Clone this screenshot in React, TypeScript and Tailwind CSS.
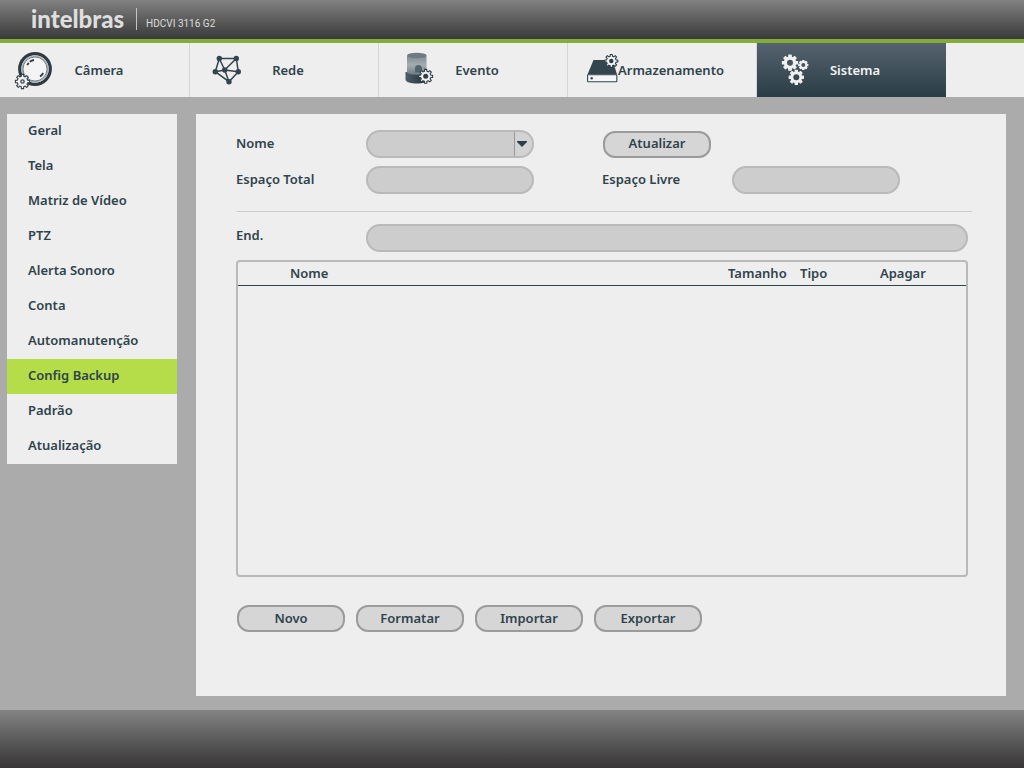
import type { ReactNode } from 'react';
import clsx from 'clsx';

type GearProps = {
  cx: number;
  cy: number;
  r: number;
  hole: number;
  teeth?: number;
  fill?: string;
  stroke?: string;
  holeFill?: string;
};

const gearPath = (cx: number, cy: number, r: number, teeth: number) => {
  const inner = r * 0.74;
  const step = (Math.PI * 2) / teeth;
  const points: string[] = [];
  for (let i = 0; i < teeth; i++) {
    const a = i * step - Math.PI / 2;
    for (const [offset, radius] of [
      [-0.3, inner],
      [-0.2, r],
      [0.2, r],
      [0.3, inner],
    ]) {
      const t = a + offset * step;
      points.push(
        `${(cx + radius * Math.cos(t)).toFixed(2)} ${(cy + radius * Math.sin(t)).toFixed(2)}`
      );
    }
  }
  return `M${points.join('L')}Z`;
};

const Gear = ({
  cx,
  cy,
  r,
  hole,
  teeth = 8,
  fill = '#f1f1f1',
  stroke = '#2f3f48',
  holeFill = '#2f3f48',
}: GearProps) => (
  <>
    <path
      d={gearPath(cx, cy, r, teeth)}
      fill={fill}
      stroke={stroke}
      strokeWidth={1.1}
      strokeLinejoin="round"
    />
    <circle cx={cx} cy={cy} r={hole} fill={holeFill} />
  </>
);

const TabIcon = ({ children }: { children: ReactNode }) => (
  <svg
    viewBox="0 0 50 54"
    aria-hidden="true"
    className="h-[54px] w-[50px] shrink-0 overflow-visible"
  >
    {children}
  </svg>
);

const CameraIcon = () => (
  <TabIcon>
    <circle cx="34" cy="26" r="15.3" fill="#f4f4f4" stroke="#2f3b44" strokeWidth="3.2" />
    <circle cx="34" cy="26" r="12.9" fill="none" stroke="#a9b0b4" strokeWidth="1.4" />
    <circle cx="34" cy="26" r="12" fill="none" stroke="#4a565e" strokeWidth="0.7" />
    <path d="M26.2 22.2a9 9 0 0 1 1.600-2.400" stroke="#2f3b44" strokeWidth="1.8" fill="none" />
    <path d="M28.8 18.8a9 9 0 0 1 4.200-1.800" stroke="#2f3b44" strokeWidth="1.8" fill="none" />
    <path d="M39 33.400a9 9 0 0 0 3.200-3.400" stroke="#2f3b44" strokeWidth="1.8" fill="none" />
    <Gear cx={21.5} cy={38.5} r={7.2} hole={2.3} holeFill="#3c4a52" />
    <circle cx="21.5" cy="38.5" r="1" fill="#f1f1f1" />
  </TabIcon>
);

const NetworkIcon = () => (
  <TabIcon>
    <path
      d="M29.3 15.5H46.3L48.3 28.7L39 38.7L25.3 28.7ZM29.3 15.5L34.7 27L46.3 15.5M25.3 28.7L34.7 27L48.3 28.7M34.7 27L39 38.7"
      fill="none"
      stroke="#33444e"
      strokeWidth="1.5"
    />
    {[
      [29.3, 15.5],
      [46.3, 15.5],
      [25.3, 28.7],
      [48.3, 28.7],
      [34.7, 27],
      [39, 38.7],
    ].map(([x, y]) => (
      <circle key={`${x}-${y}`} cx={x} cy={y} r="2.7" fill="#33444e" />
    ))}
  </TabIcon>
);

const EventIcon = () => (
  <TabIcon>
    <defs>
      <linearGradient id="siren-glass" x1="0" x2="0" y1="0" y2="1">
        <stop offset="0" stopColor="#7f8a90" />
        <stop offset="0.5" stopColor="#a3adb2" />
        <stop offset="1" stopColor="#6c7a82" />
      </linearGradient>
      <linearGradient id="siren-base" x1="0" x2="1" y1="0" y2="0">
        <stop offset="0" stopColor="#4d5d66" />
        <stop offset="1" stopColor="#1f2e37" />
      </linearGradient>
    </defs>
    <path d="M26.5 29v7.5c0 5.4 22.5 5.4 22.5 0V29Z" fill="url(#siren-base)" />
    <path d="M28 12.5V29.5c2 3 17.5 3 19.5 0V12.5Z" fill="url(#siren-glass)" />
    <ellipse cx="37.8" cy="12.5" rx="9.7" ry="2.7" fill="#6f7b82" />
    <path d="M36 29.5v-4a3.5 3.5 0 0 1 7 0v4Z" fill="#54646d" />
    <Gear cx={46.7} cy={33.3} r={7} hole={2.5} />
  </TabIcon>
);

const StorageIcon = () => (
  <TabIcon>
    <path d="M25.5 17H44.5L49 31.5H19.5Z" fill="#33464f" />
    <rect
      x="19.6"
      y="31.8"
      width="29.2"
      height="7"
      rx="0.6"
      fill="#f6f6f6"
      stroke="#33464f"
      strokeWidth="1.1"
    />
    <circle cx="23.7" cy="35.3" r="1.2" fill="#33464f" />
    <Gear cx={43.3} cy={18} r={6.6} hole={2.2} />
  </TabIcon>
);

const SystemIcon = () => (
  <TabIcon>
    <Gear cx={33} cy={19.7} r={7.7} hole={3} stroke="#f1f1f1" holeFill="#46545e" />
    <Gear cx={46.3} cy={22} r={4.6} hole={2} stroke="#f1f1f1" holeFill="#46545e" />
    <Gear cx={39.3} cy={34.3} r={7.2} hole={3} stroke="#f1f1f1" holeFill="#384a54" />
  </TabIcon>
);

const tabs = [
  { label: 'Câmera', Icon: CameraIcon },
  { label: 'Rede', Icon: NetworkIcon },
  { label: 'Evento', Icon: EventIcon },
  { label: 'Armazenamento', Icon: StorageIcon },
  { label: 'Sistema', Icon: SystemIcon, active: true },
];

const menu = [
  'Geral',
  'Tela',
  'Matriz de Vídeo',
  'PTZ',
  'Alerta Sonoro',
  'Conta',
  'Automanutenção',
  'Config Backup',
  'Padrão',
  'Atualização',
];

const Button = ({ children }: { children: ReactNode }) => (
  <button
    type="button"
    className="h-[27px] w-[108px] rounded-xl border-2 border-[#9b9b9b] bg-[#d6d6d6] pb-0.5 leading-4 font-semibold"
  >
    {children}
  </button>
);

const fieldClass =
  'h-7 w-full rounded-full border-2 border-[#b9b9b9] bg-[#cdcdcd] px-3 outline-none';

const Header = () => (
  <header className="border-b-4 border-[#83ac38]">
    <div className="flex h-[39px] items-center bg-linear-to-b from-[#828282] to-[#3a3a3a] pl-[31px]">
      <span className="pb-0.5 font-[Lato] text-[24px] leading-6 font-black text-[#dedede]">
        intelbras
      </span>
      <span className="mb-0.5 ml-3 h-[22px] w-px bg-[#c4c4c4]" />
      <span className="mt-2 ml-[9px] font-[Roboto] text-[10px] leading-4 font-normal text-[#dcdcdc]">
        HDCVI 3116 G2
      </span>
    </div>
  </header>
);

const Tabs = () => (
  <nav className="flex bg-[#eeeeee] pl-px">
    {tabs.map(({ label, Icon, active }) => (
      <a
        key={label}
        href="#"
        aria-current={active ? 'page' : undefined}
        className={clsx(
          'flex w-[189px] items-center',
          active
            ? 'bg-linear-to-b from-[#566370] to-[#2a3d45] text-[#f3f3f3]'
            : 'border-r border-[#d6d6d6]'
        )}
      >
        <Icon />
        <span className="min-w-24 text-center leading-4">{label}</span>
      </a>
    ))}
  </nav>
);

const Sidebar = () => (
  <aside className="w-[170px] shrink-0 bg-[#eeeeee]">
    <ul>
      {menu.map((item) => (
        <li key={item}>
          <a
            href="#"
            className={clsx(
              'flex h-[35px] items-center pb-0.5 pl-[21px]',
              item === 'Config Backup' && 'bg-[#b5dd4a]'
            )}
          >
            {item}
          </a>
        </li>
      ))}
    </ul>
  </aside>
);

const DeviceForm = () => (
  <div className="grid grid-cols-[130px_168px_68px_130px_168px] items-center gap-y-2">
    <label htmlFor="device">Nome</label>
    <div className="relative">
      <select id="device" className={clsx(fieldClass, 'appearance-none')}>
        <option value=""></option>
      </select>
      <span className="pointer-events-none absolute inset-y-0.5 right-0.5 flex w-[18px] items-center rounded-r-full border-l border-[#999999] bg-[#d3d3d3] pl-0.5">
        <svg viewBox="0 0 10 6" className="h-1.5 w-2.5" aria-hidden="true">
          <path d="M0 0h10v1L5 6L0 1Z" fill="#2b3f49" />
        </svg>
      </span>
    </div>
    <div className="col-start-4 pl-px">
      <Button>Atualizar</Button>
    </div>
    <label htmlFor="total" className="col-start-1">
      Espaço Total
    </label>
    <input id="total" readOnly className={fieldClass} />
    <label htmlFor="free" className="col-start-4">
      Espaço Livre
    </label>
    <input id="free" readOnly className={fieldClass} />
  </div>
);

const FileTable = () => (
  <div className="mt-2 min-h-40 flex-1 rounded border-2 border-[#b9b9b9]">
    <table className="w-full table-fixed">
      <thead>
        <tr className="h-[23px] border-b border-[#2f434c] text-left leading-4 *:font-semibold">
          <td className="w-[52px]" />
          <th scope="col">Nome</th>
          <th scope="col" className="w-[72px]">
            Tamanho
          </th>
          <th scope="col" className="w-20">
            Tipo
          </th>
          <th scope="col" className="w-[86px]">
            Apagar
          </th>
        </tr>
      </thead>
      <tbody />
    </table>
  </div>
);

export default function App() {
  return (
    <div className="flex min-h-screen flex-col bg-[#ababab] font-['Noto_Sans',sans-serif] text-[13px] font-semibold text-[#2f434c]">
      <Header />
      <Tabs />
      <div className="flex flex-1 gap-[19px] pt-[17px] pr-[18px] pb-3.5 pl-[7px]">
        <div>
          <Sidebar />
        </div>
        <main className="flex min-w-0 flex-1 flex-col bg-[#eeeeee] pt-4 pr-[38px] pb-16 pl-10">
          <DeviceForm />
          <hr className="mt-[17px] -mr-1 ml-px border-[#cccccc]" />
          <div className="mt-3 flex items-center">
            <label htmlFor="address" className="w-[130px] shrink-0 pb-1">
              End.
            </label>
            <input id="address" readOnly className={fieldClass} />
          </div>
          <FileTable />
          <div className="mt-7 flex gap-[11px] pl-px">
            <Button>Novo</Button>
            <Button>Formatar</Button>
            <Button>Importar</Button>
            <Button>Exportar</Button>
          </div>
        </main>
      </div>
      <footer className="h-[58px] bg-linear-to-b from-[#848484] to-[#383636]" />
    </div>
  );
}
